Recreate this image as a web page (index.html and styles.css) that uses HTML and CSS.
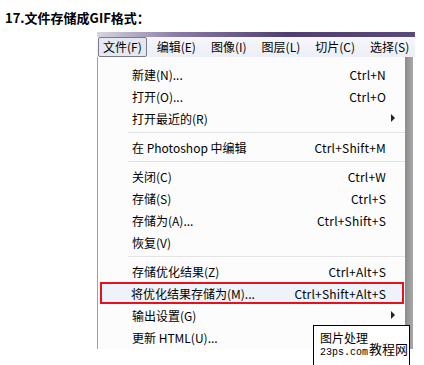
FILE: index.html
```html
<!DOCTYPE html>
<html>
<head>
    <title>文件存储成GIF格式</title>
    <link rel="stylesheet" href="styles.css">
</head>
<body>
    <div class="page">
        <h1 class="title">17.文件存储成GIF格式：</h1>

        <div class="window">
            <div class="titlebar"></div>
            <div class="menubar">
                <span class="menubar-item active">文件(F)</span>
                <span class="menubar-item">编辑(E)</span>
                <span class="menubar-item">图像(I)</span>
                <span class="menubar-item">图层(L)</span>
                <span class="menubar-item">切片(C)</span>
                <span class="menubar-item">选择(S)</span>
            </div>
            <div class="window-body">
                <ul class="menu">
                    <li class="item"><span>新建(N)...</span><span class="key">Ctrl+N</span></li>
                    <li class="item"><span>打开(O)...</span><span class="key">Ctrl+O</span></li>
                    <li class="item"><span>打开最近的(R)</span><span class="arrow"></span></li>
                    <li class="sep"></li>
                    <li class="item"><span>在 Photoshop 中编辑</span><span class="key">Ctrl+Shift+M</span></li>
                    <li class="sep"></li>
                    <li class="item"><span>关闭(C)</span><span class="key">Ctrl+W</span></li>
                    <li class="item"><span>存储(S)</span><span class="key">Ctrl+S</span></li>
                    <li class="item"><span>存储为(A)...</span><span class="key">Ctrl+Shift+S</span></li>
                    <li class="item"><span>恢复(V)</span></li>
                    <li class="sep"></li>
                    <li class="item"><span>存储优化结果(Z)</span><span class="key">Ctrl+Alt+S</span></li>
                    <li class="item marked"><span>将优化结果存储为(M)...</span><span class="key">Ctrl+Shift+Alt+S</span></li>
                    <li class="item"><span>输出设置(G)</span><span class="arrow"></span></li>
                    <li class="item"><span>更新 HTML(U)...</span></li>
                </ul>
                <div class="body-edge"></div>
            </div>
        </div>

        <div class="watermark">
            <div class="wm-left">
                <span class="wm-top">图片处理</span>
                <span class="wm-site">23ps.com</span>
            </div>
            <span class="wm-big">教程网</span>
        </div>
    </div>
</body>
</html>
```

FILE: styles.css
```css
body {
    margin: 0;
    background: #fff;
}

.page {
    position: relative;
    width: 424px;
    height: 365px;
    overflow: hidden;
    font-family: "Noto Sans CJK SC", sans-serif;
    color: #000;
}

.title {
    margin: 0;
    padding: 8px 0 0 5px;
    height: 24px;
    font-size: 13px;
    line-height: 20px;
    font-weight: bold;
}

.window {
    margin-left: 97px;
    width: 318px;
}

.titlebar {
    height: 5px;
    background: linear-gradient(to right, #d6d6de, #8a7ca6 25%, #4e3f70 60%, #5a4a7c);
}

.menubar {
    display: flex;
    height: 20px;
    padding-left: 1px;
    background: linear-gradient(#f6f6fb, #eceff6);
    font-size: 12px;
    line-height: 18px;
    white-space: nowrap;
}

.menubar-item {
    flex-shrink: 0;
    padding: 0 4px;
    margin-right: 5px;
    border: 1px solid transparent;
}

.menubar-item.active {
    border-color: #7a7a88;
    border-radius: 2px;
    background: #e4e8f0;
}

.window-body {
    display: flex;
}

.menu {
    list-style: none;
    margin: 0;
    padding: 6px 0 1px;
    width: 307px;
    background: #fcfcfc;
    border-left: 1px solid #a0a0a0;
    font-size: 12px;
}

.item {
    display: flex;
    align-items: center;
    justify-content: space-between;
    height: 22px;
    padding: 0 19px 0 34px;
    box-sizing: border-box;
    white-space: nowrap;
}

.item.marked {
    margin: 0 1px 0 2px;
    padding: 0 16px 0 29px;
    border: 2px solid #e8101c;
    background: #eef3fa;
}

.key {
    letter-spacing: 0.2px;
}

.arrow {
    width: 0;
    height: 0;
    margin-right: -9px;
    border-left: 4px solid #222;
    border-top: 4px solid transparent;
    border-bottom: 4px solid transparent;
}

.sep {
    height: 7px;
    margin-left: 30px;
    background: linear-gradient(transparent 3px, #e2e2e2 3px, #e2e2e2 4px, #fff 4px, #fff 5px, transparent 5px);
}

.body-edge {
    width: 8px;
    background: linear-gradient(to right, #8c8c8c, #a8a8a8);
}

.watermark {
    position: absolute;
    left: 313px;
    top: 325px;
    width: 97px;
    height: 45px;
    display: flex;
    gap: 1px;
    padding: 4px 0 0 6px;
    box-sizing: border-box;
    background: #fff;
    border: 1px solid #000;
    white-space: nowrap;
}

.wm-left {
    flex-shrink: 0;
    display: flex;
    flex-direction: column;
}

.wm-top {
    font-size: 12px;
    line-height: 16px;
}

.wm-site {
    font-family: "Liberation Mono", monospace;
    font-size: 10px;
    line-height: 14px;
}

.wm-big {
    flex-shrink: 0;
    font-size: 13px;
    line-height: 18px;
    margin-top: 10px;
}
```
